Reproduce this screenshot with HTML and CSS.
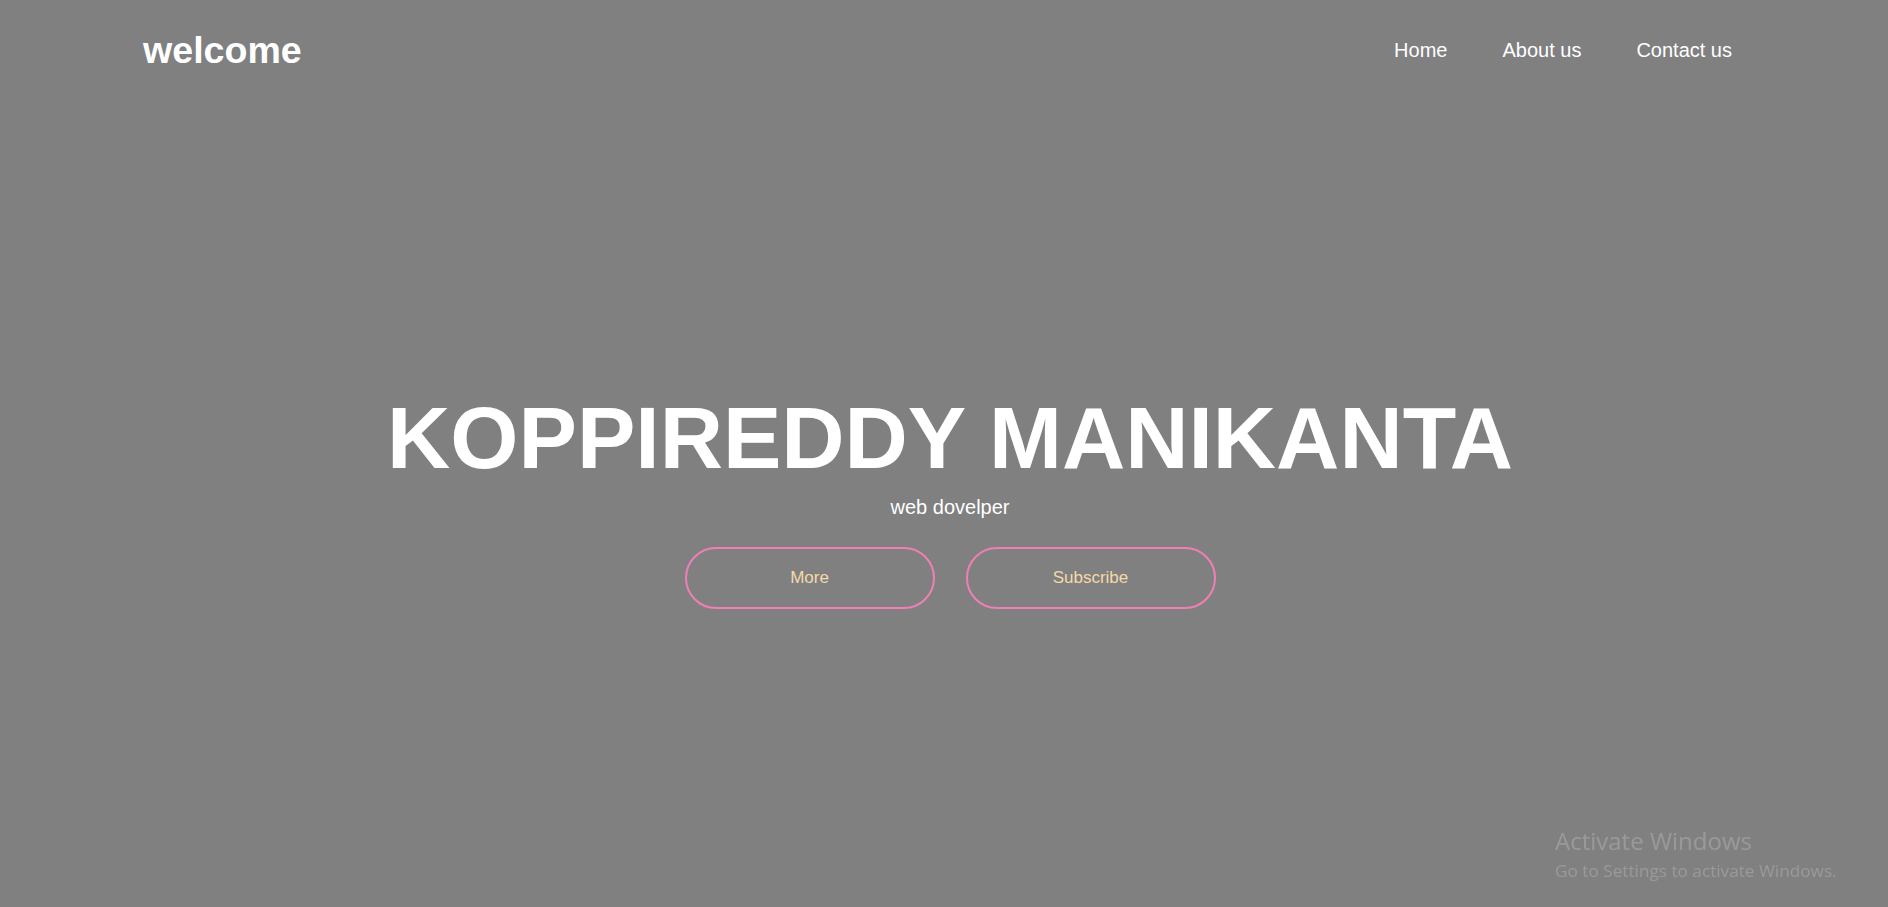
FILE: index.html
```html
<!DOCTYPE html>
<html lang="en">
<head>
<meta charset="utf-8">
<title>welcome</title>
<link rel="stylesheet" href="styles.css">
</head>
<body>
  <header class="site-header">
    <div class="logo">welcome</div>
    <nav class="nav">
      <a class="nav-link" href="#">Home</a>
      <a class="nav-link" href="#">About us</a>
      <a class="nav-link" href="#">Contact us</a>
    </nav>
  </header>
  <main class="hero">
    <h1 class="hero-title">KOPPIREDDY MANIKANTA</h1>
    <p class="hero-sub">web dovelper</p>
    <div class="hero-actions">
      <button class="btn">More</button>
      <button class="btn">Subscribe</button>
    </div>
  </main>
  <div class="watermark">
    <div class="wm-title">Activate Windows</div>
    <div class="wm-sub">Go to Settings to activate Windows.</div>
  </div>
</body>
</html>
```

FILE: styles.css
```css
* {
  box-sizing: border-box;
}

html, body {
  margin: 0;
  padding: 0;
  height: 100%;
}

body {
  background: #808080;
  font-family: "Liberation Sans", Arial, sans-serif;
  color: #ffffff;
  display: flex;
  flex-direction: column;
  min-height: 100vh;
  overflow: hidden;
}

.site-header {
  display: flex;
  align-items: center;
  justify-content: space-between;
  padding: 31px 156px 33px 143px;
}

.logo {
  font-size: 37.6px;
  line-height: 38px;
  font-weight: bold;
}

.nav {
  display: flex;
  gap: 55px;
}

.nav-link {
  color: #ffffff;
  text-decoration: none;
  font-size: 20px;
  line-height: 20px;
}

.hero {
  flex: 1;
  display: flex;
  flex-direction: column;
  align-items: center;
  justify-content: center;
  padding: 0 0 7px 12px;
}

.hero-title {
  margin: 0;
  font-size: 87.6px;
  line-height: 88px;
  font-weight: bold;
}

.hero-sub {
  margin: 15px 0 0;
  font-size: 20px;
  line-height: 20px;
}

.hero-actions {
  display: flex;
  gap: 31px;
  margin-top: 30px;
}

.btn {
  width: 250px;
  height: 62px;
  border: 2px solid #f07fb6;
  border-radius: 31px;
  background: transparent;
  color: #f5d9a8;
  font-family: "Liberation Sans", Arial, sans-serif;
  font-size: 17px;
  padding: 0;
}

.watermark {
  position: fixed;
  left: 1555px;
  top: 827px;
  font-family: "Open Sans", "Noto Sans", sans-serif;
  color: rgba(255, 255, 255, 0.2);
  white-space: nowrap;
}

.wm-title {
  font-size: 24px;
  line-height: 28px;
}

.wm-sub {
  margin-top: 2px;
  font-size: 17.2px;
  line-height: 28px;
}
```
